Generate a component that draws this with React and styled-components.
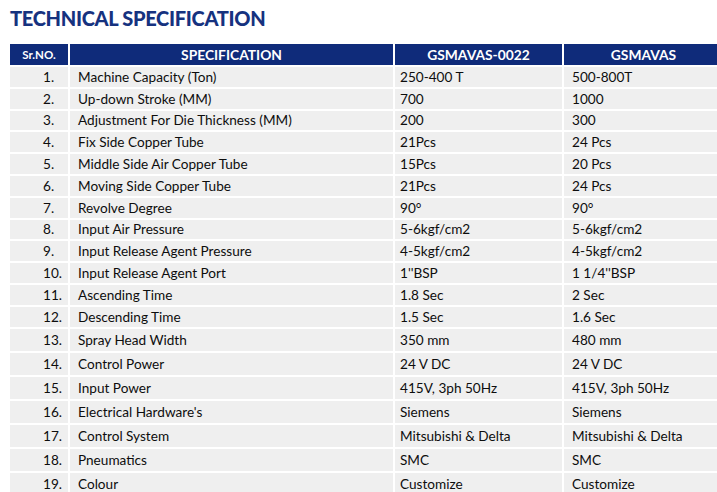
import styled, { createGlobalStyle } from "styled-components";

const GlobalStyle = createGlobalStyle`
  body {
    margin: 0;
    background: #ffffff;
    font-family: Lato, "Open Sans", sans-serif;
    overflow: hidden;
  }
`;

const specs = [
  ["Machine Capacity (Ton)", "250-400 T", "500-800T"],
  ["Up-down Stroke (MM)", "700", "1000"],
  ["Adjustment For Die Thickness (MM)", "200", "300"],
  ["Fix Side Copper Tube", "21Pcs", "24 Pcs"],
  ["Middle Side Air Copper Tube", "15Pcs", "20 Pcs"],
  ["Moving Side Copper Tube", "21Pcs", "24 Pcs"],
  ["Revolve Degree", "90°", "90°"],
  ["Input Air Pressure", "5-6kgf/cm2", "5-6kgf/cm2"],
  ["Input Release Agent Pressure", "4-5kgf/cm2", "4-5kgf/cm2"],
  ["Input Release Agent Port", "1''BSP", "1 1/4''BSP"],
  ["Ascending Time", "1.8 Sec", "2 Sec"],
  ["Descending Time", "1.5 Sec", "1.6 Sec"],
  ["Spray Head Width", "350 mm", "480 mm"],
  ["Control Power", "24 V DC", "24 V DC"],
  ["Input Power", "415V, 3ph 50Hz", "415V, 3ph 50Hz"],
  ["Electrical Hardware's", "Siemens", "Siemens"],
  ["Control System", "Mitsubishi & Delta", "Mitsubishi & Delta"],
  ["Pneumatics", "SMC", "SMC"],
  ["Colour", "Customize", "Customize"],
];

const Page = styled.div`
  padding: 6px 0 0 10px;
`;

const Title = styled.h1`
  margin: 0 0 14px;
  font-size: 20px;
  font-weight: 900;
  color: #16327f;
  letter-spacing: -0.3px;
  line-height: 24px;
`;

const Table = styled.table`
  border-collapse: collapse;
  table-layout: fixed;
  width: 707px;
  font-size: 13.6px;
  color: #0d0d0d;
`;

const HeadCell = styled.th`
  width: ${(p) => p.$w}px;
  height: 21px;
  padding: 0;
  background: #0f2b7a;
  color: #ffffff;
  font-weight: 700;
  font-size: ${(p) => (p.$small ? 11.5 : 13.8)}px;
  text-align: center;
  border-left: 2px solid #ffffff;
  &:first-child {
    border-left: none;
  }
`;

const Row = styled.tr`
  height: ${(p) => (p.$tall ? 24 : 21.8)}px;
  border-top: 2px solid #ffffff;
`;

const Cell = styled.td`
  padding: 0 0 0 ${(p) => p.$pad}px;
  background: #efefef;
  border-left: 2px solid #ffffff;
  white-space: nowrap;
  &:first-child {
    border-left: none;
  }
`;

export default function App() {
  return (
    <>
      <GlobalStyle />
      <Page>
        <Title>TECHNICAL SPECIFICATION</Title>
        <Table>
          <thead>
            <tr>
              <HeadCell $w={58} $small>Sr.NO.</HeadCell>
              <HeadCell $w={323}>SPECIFICATION</HeadCell>
              <HeadCell $w={167}>GSMAVAS-0022</HeadCell>
              <HeadCell $w={159}>GSMAVAS</HeadCell>
            </tr>
          </thead>
          <tbody>
            {specs.map(([name, a, b], i) => (
              <Row key={name} $tall={i >= 12}>
                <Cell $pad={33}>{i + 1}.</Cell>
                <Cell $pad={8}>{name}</Cell>
                <Cell $pad={5}>{a}</Cell>
                <Cell $pad={8}>{b}</Cell>
              </Row>
            ))}
          </tbody>
        </Table>
      </Page>
    </>
  );
}
